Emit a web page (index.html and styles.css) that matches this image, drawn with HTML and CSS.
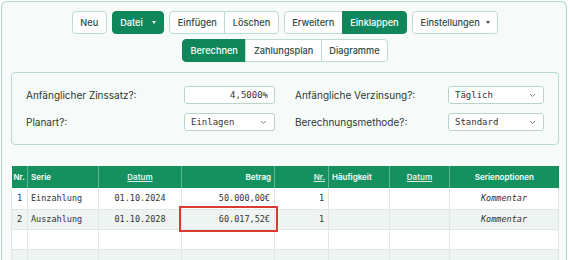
FILE: index.html
```html
<!DOCTYPE html>
<html lang="de">

<head>
    <meta charset="UTF-8">
    <meta name="viewport" content="width=device-width, initial-scale=1.0">
    <title>Sparplan</title>
    <link rel="stylesheet" href="styles.css">
</head>

<body>
    <div class="card">
        <div class="toolbar">
            <div class="tool-row">
                <button class="btn">Neu</button>
                <button class="btn btn-green">Datei <span class="caret"></span></button>
                <div class="btn-group">
                    <button class="btn">Einfügen</button>
                    <button class="btn">Löschen</button>
                </div>
                <div class="btn-group">
                    <button class="btn">Erweitern</button>
                    <button class="btn btn-green">Einklappen</button>
                </div>
                <button class="btn">Einstellungen <span class="caret dark"></span></button>
            </div>
            <div class="tool-row">
                <div class="btn-group">
                    <button class="btn btn-green">Berechnen</button>
                    <button class="btn">Zahlungsplan</button>
                    <button class="btn">Diagramme</button>
                </div>
            </div>
        </div>

        <div class="settings">
            <label>Anfänglicher Zinssatz?:</label>
            <div class="field field-num">4,5000%</div>
            <label class="label-right">Anfängliche Verzinsung?:</label>
            <div class="field select">
                <span>Täglich</span>
                <svg width="7" height="5" viewBox="0 0 7 5"><path d="M1 1l2.5 2.5L6 1" fill="none" stroke="#6b7f78" stroke-width="0.9"/></svg>
            </div>

            <label>Planart?:</label>
            <div class="field select">
                <span>Einlagen</span>
                <svg width="7" height="5" viewBox="0 0 7 5"><path d="M1 1l2.5 2.5L6 1" fill="none" stroke="#6b7f78" stroke-width="0.9"/></svg>
            </div>
            <label class="label-right">Berechnungsmethode?:</label>
            <div class="field select">
                <span>Standard</span>
                <svg width="7" height="5" viewBox="0 0 7 5"><path d="M1 1l2.5 2.5L6 1" fill="none" stroke="#6b7f78" stroke-width="0.9"/></svg>
            </div>
        </div>

        <table class="plan">
            <colgroup>
                <col style="width: 16px">
                <col style="width: 71px">
                <col style="width: 83px">
                <col style="width: 93px">
                <col style="width: 54px">
                <col style="width: 61px">
                <col style="width: 60px">
                <col>
            </colgroup>
            <thead>
                <tr>
                    <th class="left">Nr.</th>
                    <th class="left">Serie</th>
                    <th><a>Datum</a></th>
                    <th class="right">Betrag</th>
                    <th class="right"><a>Nr.</a></th>
                    <th class="left">Häufigkeit</th>
                    <th><a>Datum</a></th>
                    <th>Serienoptionen</th>
                </tr>
            </thead>
            <tbody>
                <tr>
                    <td>1</td>
                    <td class="left">Einzahlung</td>
                    <td>01.10.2024</td>
                    <td class="right">50.000,00€</td>
                    <td class="right">1</td>
                    <td></td>
                    <td></td>
                    <td class="note">Kommentar</td>
                </tr>
                <tr>
                    <td>2</td>
                    <td class="left">Auszahlung</td>
                    <td>01.10.2028</td>
                    <td class="right marked">60.017,52€</td>
                    <td class="right">1</td>
                    <td></td>
                    <td></td>
                    <td class="note">Kommentar</td>
                </tr>
                <tr>
                    <td></td><td></td><td></td><td></td><td></td><td></td><td></td><td></td>
                </tr>
                <tr>
                    <td></td><td></td><td></td><td></td><td></td><td></td><td></td><td></td>
                </tr>
            </tbody>
        </table>
    </div>
</body>

</html>
```

FILE: styles.css
```css
* {
    margin: 0;
    padding: 0;
    box-sizing: border-box;
}

body {
    background: #fff;
    font-family: 'Inter', 'Noto Sans', sans-serif;
    color: #2b3d37;
    overflow: hidden;
}

.card {
    margin: 1px 3px 0 1px;
    border: 1px solid #a6dac8;
    border-bottom: none;
    border-radius: 6px 6px 0 0;
    background: #f6fbf9;
    padding: 9px 7px 0 9px;
    min-height: 300px;
}

.toolbar {
    display: flex;
    flex-direction: column;
    gap: 5px;
}

.tool-row {
    display: flex;
    justify-content: center;
    gap: 5px;
}

.btn {
    height: 23px;
    padding: 0 7.5px;
    font-family: 'Inter', sans-serif;
    font-size: 9.2px;
    font-weight: 500;
    color: #2f4a41;
    background: #fff;
    border: 1px solid #bcdccf;
    border-radius: 4px;
    display: flex;
    align-items: center;
    gap: 6px;
}

.btn-green {
    background: #10875b;
    border-color: #10875b;
    color: #fff;
}

.caret {
    width: 0;
    height: 0;
    border-left: 2.5px solid transparent;
    border-right: 2.5px solid transparent;
    border-top: 3px solid #fff;
    margin-left: 3px;
}

.caret.dark {
    border-top-color: #4a5a55;
    margin-left: 0;
}

.btn-group {
    display: flex;
}

.btn-group .btn {
    border-radius: 0;
    margin-left: -1px;
}

.btn-group .btn:first-child {
    border-radius: 4px 0 0 4px;
    margin-left: 0;
}

.btn-group .btn:last-child {
    border-radius: 0 4px 4px 0;
}

.settings {
    margin-top: 10px;
    border: 1px solid #b4dccd;
    border-radius: 4px;
    padding: 13px 14px 13px 14px;
    display: grid;
    grid-template-columns: 158px 91px 1fr 96px;
    row-gap: 9px;
    align-items: center;
}

.settings label {
    font-size: 10px;
    color: #2a3833;
}

.label-right {
    padding-left: 20px;
}

.field {
    height: 18px;
    background: #fff;
    border: 1px solid #b9d5ca;
    border-radius: 3px;
    font-family: 'DejaVu Sans Mono', monospace;
    font-size: 9px;
    color: #333;
    display: flex;
    align-items: center;
    padding: 0 6px;
}

.field-num {
    justify-content: flex-end;
}

.select {
    justify-content: space-between;
    padding-right: 7px;
}

.plan {
    margin-top: 21px;
    width: 100%;
    border-collapse: collapse;
    table-layout: fixed;
    background: #fff;
}

.plan th {
    background: #15915f;
    color: #fff;
    font-size: 8px;
    font-weight: 600;
    height: 22px;
    padding: 0 3px;
    text-align: center;
    border-left: 1px solid #5cb892;
    white-space: nowrap;
}

.plan th:first-child {
    border-left: none;
    padding: 0 2px;
}

.plan th a {
    color: #e2f4ec;
    text-decoration: underline;
    text-decoration-color: #d7efe4;
}

.plan td {
    font-family: 'DejaVu Sans Mono', monospace;
    font-size: 8.5px;
    color: #333;
    height: 20px;
    padding: 0 4px;
    text-align: center;
    border: 1px solid #e0e8e5;
    white-space: nowrap;
}

.plan tbody tr:first-child td {
    height: 21px;
    border-top: none;
}

.plan tbody tr:nth-child(even) {
    background: #eef4f2;
}

.plan .left {
    text-align: left;
}

.plan .right {
    text-align: right;
}

.plan td.left {
    padding-left: 3px;
}

.plan td.note {
    font-style: italic;
}

.plan td.marked {
    outline: 2px solid #d83b33;
    outline-offset: 1px;
}
```
